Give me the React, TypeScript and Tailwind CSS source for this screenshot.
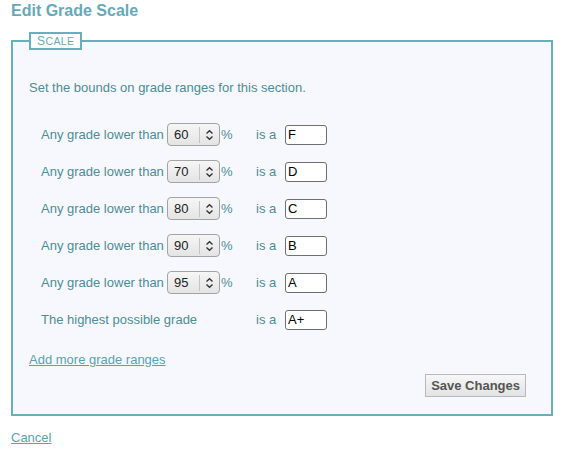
import React from 'react';

const rows = [
  { bound: '60', grade: 'F' },
  { bound: '70', grade: 'D' },
  { bound: '80', grade: 'C' },
  { bound: '90', grade: 'B' },
  { bound: '95', grade: 'A' },
];

function Spinner({ value }: { value: string }) {
  return (
    <div className="flex h-[23px] w-[53px] items-center rounded-[4px] border border-[#a3a3a3] bg-gradient-to-b from-[#f6f6f6] to-[#e4e4e4]">
      <span className="flex-1 pl-[6px] text-[13px] text-[#222]">{value}</span>
      <div className="h-[16px] w-px bg-[#c4c4c4]" />
      <svg width="19" height="12" viewBox="0 0 19 12" className="shrink-0">
        <path d="M6.5 4.5 L9.5 1.8 L12.5 4.5" fill="none" stroke="#333" strokeWidth="1.4" />
        <path d="M6.5 7.5 L9.5 10.2 L12.5 7.5" fill="none" stroke="#333" strokeWidth="1.4" />
      </svg>
    </div>
  );
}

function GradeInput({ value }: { value: string }) {
  return (
    <input
      type="text"
      defaultValue={value}
      className="h-[20px] w-[42px] rounded-[3px] border border-[#6f6f6f] bg-white pl-[2px] text-[13px] text-black outline-none"
    />
  );
}

export default function App() {
  return (
    <div className="min-h-[456px] w-[567px] bg-white px-[11px] pt-px font-['Liberation_Sans',Arial,sans-serif]">
      <h1 className="text-[16px] font-bold leading-[19px] text-[#66a9b7]">Edit Grade Scale</h1>

      {/* Scale fieldset */}
      <fieldset className="mt-[12px] w-[542px] border-2 border-[#68aebb] bg-[#f7f8fd] px-[16px] pb-[17px]">
        <legend className="flex h-[18px] items-center border-2 border-[#68aebb] bg-white px-[6px] tracking-[0.4px] text-[#66a9b7]">
          <span className="text-[12px] leading-[14px]">S</span>
          <span className="text-[10.5px] leading-[14px]">CALE</span>
        </legend>

        <p className="mt-[30px] text-[13px] leading-[16px] text-[#4d8c96]">
          Set the bounds on grade ranges for this section.
        </p>

        <div className="mt-[20px] grid grid-cols-[126px_54px_35px_29px_auto] pl-[12px] text-[13px] text-[#4d8c96]">
          {rows.map((r) => (
            <React.Fragment key={r.bound}>
              <div className="flex h-[37px] items-center">Any grade lower than</div>
              <div className="flex h-[37px] items-center">
                <Spinner value={r.bound} />
              </div>
              <div className="flex h-[37px] items-center">%</div>
              <div className="flex h-[37px] items-center">is a</div>
              <div className="flex h-[37px] items-center">
                <GradeInput value={r.grade} />
              </div>
            </React.Fragment>
          ))}
          <div className="col-span-3 flex h-[37px] items-center">The highest possible grade</div>
          <div className="flex h-[37px] items-center">is a</div>
          <div className="flex h-[37px] items-center">
            <GradeInput value="A+" />
          </div>
        </div>

        <a href="#" className="mt-[14px] block w-fit text-[13px] leading-[16px] text-[#5aa2b0] underline">
          Add more grade ranges
        </a>

        <div className="mt-[6px] flex justify-end pr-[9px]">
          <button className="h-[23px] border border-[#b8b8b8] bg-gradient-to-b from-[#f7f7f7] to-[#e3e3e3] px-[5px] text-[13px] font-bold text-[#555]">
            Save Changes
          </button>
        </div>
      </fieldset>

      <a href="#" className="mt-[14px] block w-fit text-[13px] leading-[16px] text-[#5aa2b0] underline">
        Cancel
      </a>
    </div>
  );
}
